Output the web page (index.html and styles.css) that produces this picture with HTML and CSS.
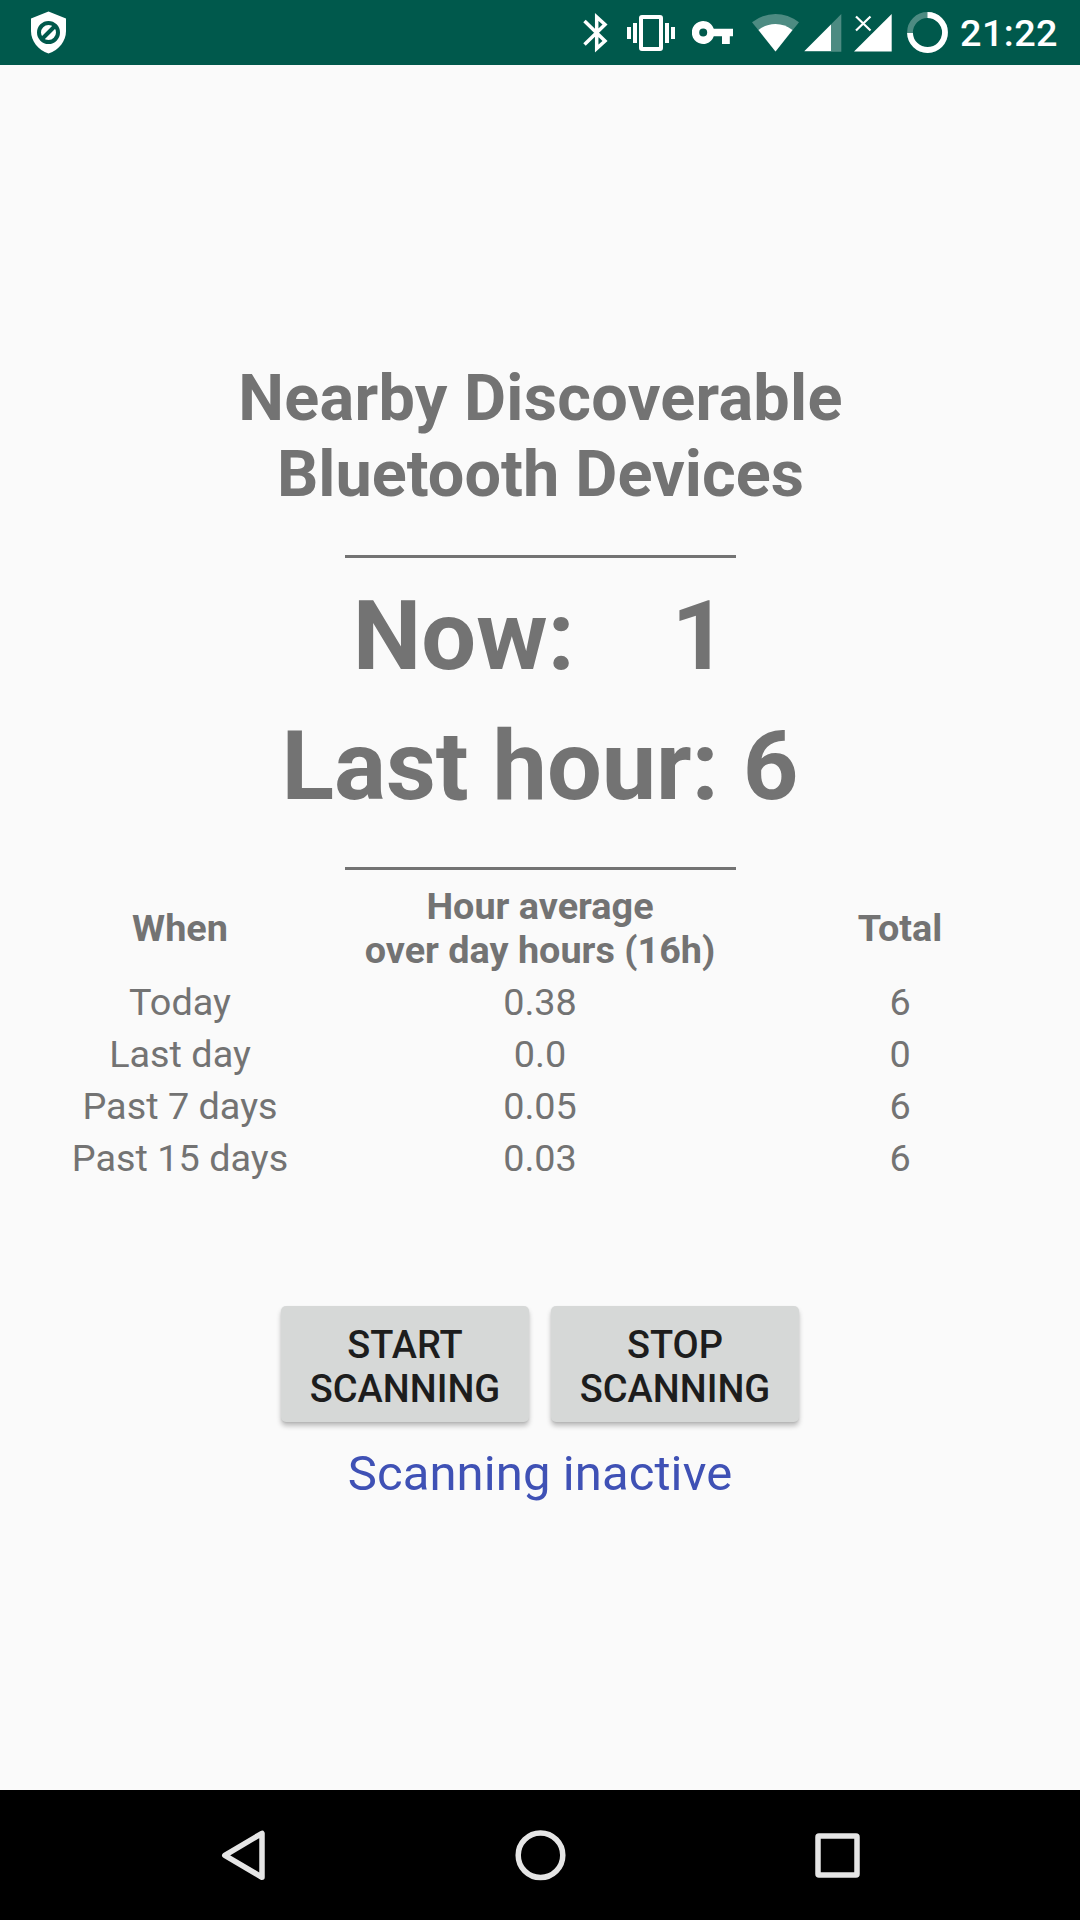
FILE: index.html
```html
<!DOCTYPE html>
<html lang="en">
<head>
<meta charset="utf-8">
<title>Nearby Discoverable Bluetooth Devices</title>
<link rel="stylesheet" href="styles.css">
</head>
<body>
<header class="status-bar">
  <svg class="shield" width="35" height="43" viewBox="31 11 35 43"><path fill="#fff" d="M48.500 11.500L66 18.500V31C66 41 59 50 48.500 53.500C38 50 31 41 31 31V18.500Z"/><g fill="none" stroke="#00594c" stroke-width="4"><circle cx="48.500" cy="32.500" r="9.500"/><path d="M42 39L55 26"/></g></svg>
  <div class="status-icons">
    <svg class="bluetooth" width="25" height="40" viewBox="583 13 25 40"><path fill="none" stroke="#fff" stroke-width="3.500" d="M584.500 21L605 41L596.700 48.500V17L605 24.500L584.500 44.500"/></svg>
    <svg class="vibrate" width="48" height="36" viewBox="627 15 48 36"><path fill="#fff" fill-rule="evenodd" d="M642 15H660Q663 15 663 18V48Q663 51 660 51H642Q639 51 639 48V18Q639 15 642 15ZM643 19V47H659V19ZM627 27H631V39H627ZM633 23H637V43H633ZM665 23H669V43H665ZM671 27H675V39H671Z"/></svg>
    <svg class="key" width="41" height="24" viewBox="692 21 41 24"><path fill="#fff" fill-rule="evenodd" d="M713.800 28.800H733V36.200H729.800V44H722V36.200H713.800A11.300 11.400 0 1 1 713.800 28.800ZM703.200 28.500A4 4 0 1 0 703.200 36.500A4 4 0 1 0 703.200 28.500Z"/></svg>
    <svg class="wifi" width="48" height="38" viewBox="752 14 48 38"><path fill="#fff" fill-opacity=".3" d="M775.500 51.500L752 22.300Q763 14 775.500 14T799 22.300Z"/><path fill="#fff" d="M775.500 51.500L758.500 30Q766 24 775.500 24T792.500 30Z"/></svg>
    <svg class="signal" width="38" height="38" viewBox="804 14 38 38"><path fill="#fff" fill-opacity=".3" d="M804 51.700L841.300 14V51.700Z"/><path fill="#fff" d="M804.500 51L831 24.500V51Z"/></svg>
    <svg class="signal-off" width="38" height="38" viewBox="854 14 38 38"><path fill="#fff" d="M854 51.500L891.700 14V51.500Z"/><path stroke="#fff" stroke-width="2.200" d="M856 16.500L870.500 30.500M870.500 16.500L856 30.500"/></svg>
    <svg class="battery" width="42" height="42" viewBox="907 12 42 42"><g fill="none" stroke="#fff" stroke-width="5.800"><circle cx="927.500" cy="32.500" r="17.500" stroke-opacity=".3"/><path d="M927.500 15A17.500 17.500 0 1 1 910 33"/></g></svg>
    <time class="clock">21:22</time>
  </div>
</header>
<main class="content">
  <h1 class="title"><span class="title-lead">Nearby Discoverable</span><br>Bluetooth Devices</h1>
  <div class="rule"></div>
  <section class="counts">
    <div class="count now">Now:&nbsp;&nbsp;&nbsp; 1</div>
    <div class="count hour">Last hour: 6</div>
  </section>
  <div class="rule"></div>
  <section class="table">
    <div class="row head"><span>When</span><span>Hour average<br>over day hours (16h)</span><span>Total</span></div>
    <div class="row"><span>Today</span><span>0.38</span><span>6</span></div>
    <div class="row"><span>Last day</span><span>0.0</span><span>0</span></div>
    <div class="row"><span>Past 7 days</span><span>0.05</span><span>6</span></div>
    <div class="row"><span>Past 15 days</span><span>0.03</span><span>6</span></div>
  </section>
  <div class="actions">
    <button class="action">START<br>SCANNING</button>
    <button class="action">STOP<br>SCANNING</button>
  </div>
  <p class="state">Scanning inactive</p>
</main>
<nav class="nav-bar">
  <svg width="70" height="70" viewBox="0 0 70 70"><path d="M52 13.300V57.300L14.800 35.300Z"/></svg>
  <svg width="70" height="70" viewBox="0 0 70 70"><circle cx="35.500" cy="35.300" r="22.300"/></svg>
  <svg width="70" height="70" viewBox="0 0 70 70"><rect x="13" y="15.900" width="39" height="39" rx="1"/></svg>
</nav>
</body>
</html>
```
FILE: styles.css
```css
* { box-sizing: border-box; }

body {
  margin: 0;
  width: 1080px;
  height: 1920px;
  display: flex;
  flex-direction: column;
  background: #fafafa;
  color: #737373;
  font-family: Roboto, sans-serif;
  font-size: 37.8px;
}

svg { display: block; flex: none; }

.status-bar {
  height: 65px;
  padding: 0 23px 0 31px;
  display: flex;
  justify-content: space-between;
  align-items: flex-start;
  background: #00594c;
  color: #fff;
}
.shield { margin-top: 11px; }
.status-icons { display: flex; align-items: flex-start; }
.bluetooth { margin: 13px 19px 0 0; }
.vibrate { margin: 15px 17px 0 0; }
.key { margin: 21px 19px 0 0; }
.wifi { margin: 14px 4px 0 0; }
.signal, .signal-off { margin: 14px 12px 0 0; }
.signal-off { margin-right: 15px; }
.battery { margin: 12px 11px 0 0; }
.clock { width: 97px; line-height: 67px; font-weight: 500; letter-spacing: .4px; white-space: nowrap; }

.content {
  flex: 1;
  padding-top: 295px;
  display: flex;
  flex-direction: column;
  align-items: center;
  text-align: center;
}
.title { margin: 0 0 43px; padding-left: 1px; font-size: 64.8px; line-height: 76px; font-weight: 700; }
.title-lead { letter-spacing: .25px; }
.rule { width: 391px; height: 3px; background: #737373; }
.counts { margin: 13px 0 36px; font-size: 97.2px; line-height: 130px; font-weight: 700; }
.count { white-space: nowrap; }
.hour { letter-spacing: -.1px; }

.table { width: 100%; margin-top: 14px; }
.row {
  display: grid;
  grid-template-columns: repeat(3, 1fr);
  align-items: center;
  line-height: 52px;
}
.head { margin-bottom: 4px; line-height: 44px; font-weight: 700; }

.actions { display: flex; gap: 22px; margin-top: 122px; }
.action {
  width: 248px;
  height: 116px;
  padding: 17px 0 11px;
  border: 0;
  border-radius: 5px;
  background: #d6d8d7;
  box-shadow: 0 4px 5px rgba(0, 0, 0, .24), 0 1px 2px rgba(0, 0, 0, .08);
  color: #1d1d1d;
  font: 500 38px/44px Roboto, sans-serif;
}
.state { margin: 23px 0 0; color: #3f51b5; font-size: 49px; line-height: 58px; letter-spacing: .1px; }

.nav-bar {
  height: 130px;
  padding: 30px 205px 0 210px;
  display: grid;
  grid-template-columns: 295px 300px 70px;
  background: #000;
}
.nav-bar svg { fill: none; stroke: #e5e5e5; stroke-width: 5.5; stroke-linejoin: round; }
```
